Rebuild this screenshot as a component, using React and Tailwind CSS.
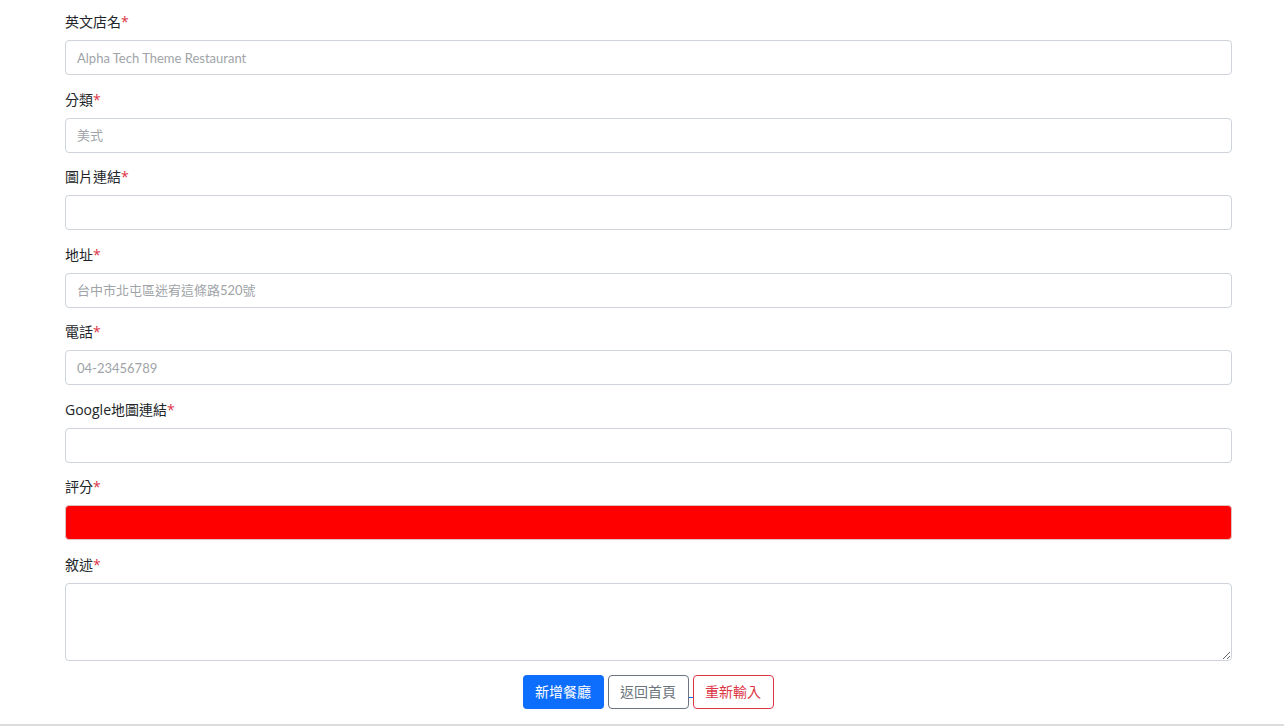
import React from 'react';

const fields = [
    { label: '英文店名', placeholder: 'Alpha Tech Theme Restaurant' },
    { label: '分類', placeholder: '美式' },
    { label: '圖片連結', placeholder: '' },
    { label: '地址', placeholder: '台中市北屯區迷宥這條路520號' },
    { label: '電話', placeholder: '04-23456789' },
    { label: 'Google地圖連結', placeholder: '' },
    { label: '評分', placeholder: '', red: true },
];

const font = { fontFamily: '"Open Sans", "Noto Sans CJK TC", sans-serif' };

const Label = ({ text }) => (
    <label className="block h-[21px] mb-2 text-[14px] leading-[21px] text-[#212529]">
        {text}<span className="text-[#dc3545]">*</span>
    </label>
);

export default function App() {
    return (
        <div className="w-[1284px] h-[726px] bg-white overflow-hidden flex flex-col" style={font}>
            <form className="ml-[65px] w-[1167px] pt-[11px] flex flex-col gap-[13.5px]">
                {fields.map((f) => (
                    <div key={f.label}>
                        <Label text={f.label} />
                        <input
                            type="text"
                            placeholder={f.placeholder}
                            className={`block w-full h-[35px] rounded-[4px] border px-[11px] text-[13px] outline-none placeholder:text-[#a0a4a8] ${f.red ? 'bg-[#ff0000] border-[#e0c0c0]' : 'bg-white border-[#ced4da]'}`}
                            style={{ fontFamily: 'Lato, "Noto Sans CJK TC", sans-serif' }}
                        />
                    </div>
                ))}
                <div>
                    <Label text="敘述" />
                    <textarea className="block w-full h-[78px] rounded-[4px] border border-[#ced4da] px-3 py-2 text-[13px] outline-none" />
                </div>
            </form>
            <div className="flex justify-center items-start mt-[14px] pl-[12px]">
                <button className="w-[81px] h-[34px] rounded-[4px] bg-[#0d6efd] text-white text-[14px]">新增餐廳</button>
                <div className="w-[4px]" />
                <button className="w-[81px] h-[34px] rounded-[4px] border border-[#6c757d] text-[#6c757d] text-[14px]">返回首頁</button>
                <div className="w-[4px] h-px bg-[#0d6efd] mt-[22px]" />
                <button className="w-[81px] h-[34px] rounded-[4px] border border-[#dc3545] text-[#dc3545] text-[14px]">重新輸入</button>
            </div>
            <div className="mt-auto h-[2px] bg-[#dcdcdc]" />
        </div>
    );
}
